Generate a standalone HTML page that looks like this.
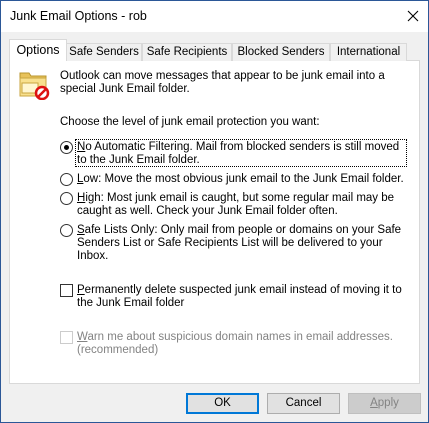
<!DOCTYPE html>
<html><head><style>
*{margin:0;padding:0;box-sizing:border-box}
body{width:429px;height:423px;overflow:hidden;background:#f0f0f0;font-family:"Liberation Sans",sans-serif;font-size:11.5px;color:#000}
.win{position:absolute;left:0;top:0;width:429px;height:423px;border:1px solid #2b5797;background:#f0f0f0}
.title{position:absolute;left:0;top:0;width:427px;height:31px;background:#fff}
.t{position:absolute;white-space:nowrap;line-height:13px}
.tab{position:absolute;top:42px;height:18px;border:1px solid #d9d9d9;border-bottom:none;background:#f0f0f0;text-align:center;line-height:16px;font-size:11.5px}
.panel{position:absolute;left:8px;top:59px;width:411px;height:324px;background:#fff;border:1px solid #d9d9d9}
.rad{position:absolute;width:13px;height:13px;border:1px solid #333;border-radius:50%;background:#fff}
.chk{position:absolute;width:13px;height:13px;border:1px solid #333;background:#fff}
.btn{position:absolute;top:392px;width:73px;height:21px;border:1px solid #adadad;background:#e1e1e1;text-align:center;line-height:19px}
u{text-decoration:underline}
</style></head><body><div class="win">
<div class="title"></div>
<div class="t" style="left:9px;top:9px;font-size:12.5px">Junk Email Options - rob</div>
<svg style="position:absolute;left:406px;top:9px" width="12" height="12"><path d="M1 1L11 11M11 1L1 11" stroke="#000" stroke-width="1.1"/></svg>
<div class="panel"></div>
<div class="tab" style="left:65px;width:76px">Safe Senders</div>
<div class="tab" style="left:141px;width:90px">Safe Recipients</div>
<div class="tab" style="left:231px;width:98px">Blocked Senders</div>
<div class="tab" style="left:329px;width:77px">International</div>
<div class="tab" style="left:8px;top:38px;width:58px;height:22px;background:#fff;line-height:20px;font-size:12.5px">Options</div>
<svg style="position:absolute;left:17px;top:69px" width="32" height="30">
<path d="M2 3h9l2 3h15v20H2z" fill="#e8c25a" stroke="#b8952e"/>
<path d="M2 8h26v18H2z" fill="#f8e08e" stroke="#c9a540"/>
<path d="M4 13h16v10H4z" fill="#fff6d0" stroke="#c9a540"/>
<circle cx="24" cy="23" r="6" fill="#fff" stroke="#d11" stroke-width="2.5"/>
<path d="M20 27L28 19" stroke="#d11" stroke-width="2.5"/>
</svg>
<div class="t" style="left:59px;top:69px">Outlook can move messages that appear to be junk email into a</div>
<div class="t" style="left:59px;top:82px">special Junk Email folder.</div>
<div class="t" style="left:59px;top:115px">Choose the level of junk email protection you want:</div>
<div class="rad" style="left:59px;top:140px"><div style="position:absolute;left:3px;top:3px;width:5px;height:5px;border-radius:50%;background:#000"></div></div>
<div style="position:absolute;left:74px;top:138px;width:332px;height:28px;border:1px dotted #000"></div>
<div class="t" style="left:76px;top:140px"><u>N</u>o Automatic Filtering. Mail from blocked senders is still moved</div>
<div class="t" style="left:76px;top:153px">to the Junk Email folder.</div>
<div class="rad" style="left:59px;top:172px"></div>
<div class="t" style="left:76px;top:172px"><u>L</u>ow: Move the most obvious junk email to the Junk Email folder.</div>
<div class="rad" style="left:59px;top:191px"></div>
<div class="t" style="left:76px;top:191px"><u>H</u>igh: Most junk email is caught, but some regular mail may be</div>
<div class="t" style="left:76px;top:204px">caught as well. Check your Junk Email folder often.</div>
<div class="rad" style="left:59px;top:223px"></div>
<div class="t" style="left:76px;top:223px"><u>S</u>afe Lists Only: Only mail from people or domains on your Safe</div>
<div class="t" style="left:76px;top:236px">Senders List or Safe Recipients List will be delivered to your</div>
<div class="t" style="left:76px;top:249px">Inbox.</div>
<div class="chk" style="left:59px;top:283px"></div>
<div class="t" style="left:76px;top:283px"><u>P</u>ermanently delete suspected junk email instead of moving it to</div>
<div class="t" style="left:76px;top:296px">the Junk Email folder</div>
<div class="chk" style="left:59px;top:330px;border-color:#ccc"></div>
<div class="t" style="left:76px;top:330px;color:#838383"><u>W</u>arn me about suspicious domain names in email addresses.</div>
<div class="t" style="left:76px;top:343px;color:#838383">(recommended)</div>
<div class="btn" style="left:185px;border:2px solid #0078d7;line-height:17px">OK</div>
<div class="btn" style="left:266px">Cancel</div>
<div class="btn" style="left:347px;border-color:#bfbfbf;background:#cccccc;color:#838383"><u>A</u>pply</div>
</div></body></html>
